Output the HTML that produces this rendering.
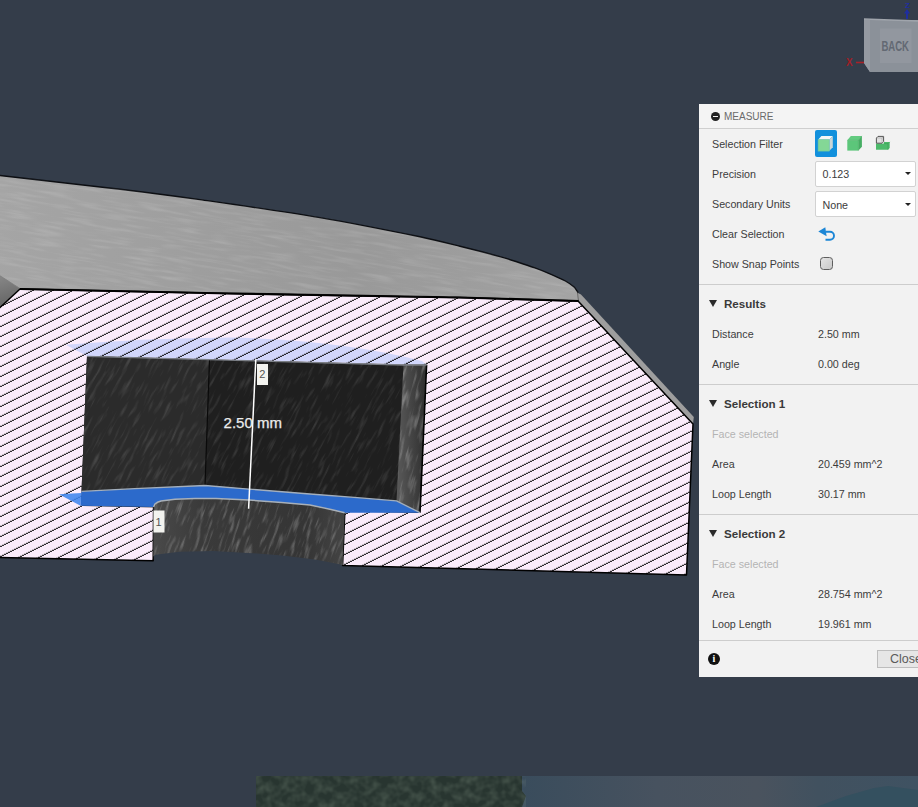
<!DOCTYPE html>
<html lang="en">
<head>
<meta charset="utf-8">
<title>Measure</title>
<style>
html,body{margin:0;padding:0;}
body{width:918px;height:807px;overflow:hidden;background:#343d4a;position:relative;font-family:"Liberation Sans",Arial,sans-serif;}
#scene{position:absolute;left:0;top:0;width:918px;height:807px;display:block;}
#photo{position:absolute;left:256px;top:776px;width:662px;height:31px;overflow:hidden;background:#3d4f5e;}
#panel{position:absolute;left:699px;top:104px;width:240px;height:572.500px;background:#f2f2f2;color:#3c3c3c;font-size:10.7px;}
#panel .hdr{position:absolute;left:0;top:0;width:100%;height:24px;border-bottom:1px solid #cfcfcf;background:#f4f4f4;}
#panel .hdr span{position:absolute;left:25px;top:6.700px;font-size:10px;color:#6a6a6a;letter-spacing:0px;}
#panel .hdr i{position:absolute;left:12px;top:8px;width:9px;height:9px;border-radius:50%;background:#222;}
#panel .hdr i:after{content:"";position:absolute;left:2px;top:4px;width:5px;height:1px;background:#f4f4f4;}
.row{position:absolute;left:13px;height:14px;line-height:14px;white-space:nowrap;}
.val{position:absolute;left:119px;height:14px;line-height:14px;white-space:nowrap;}
.sec{position:absolute;left:25px;height:14px;line-height:14px;font-weight:bold;font-size:11.6px;color:#3a3a3a;white-space:nowrap;}
.tri{position:absolute;left:10px;width:0;height:0;border-left:4.5px solid transparent;border-right:4.5px solid transparent;border-top:7px solid #2a2a2a;}
.hr{position:absolute;left:0;width:100%;height:1px;background:#cdcdcd;}
.dd{position:absolute;left:116px;width:101px;height:26px;background:#fff;border:1px solid #d2d2d2;box-sizing:border-box;border-radius:2px;}
.dd span{position:absolute;left:6.500px;top:5.500px;line-height:14px;}
.dd b{position:absolute;left:88.700px;top:10.800px;width:0;height:0;border-left:3.200px solid transparent;border-right:3.200px solid transparent;border-top:3.800px solid #222;}
.dis{color:#b4b4b4;}
</style>
</head>
<body>
<svg id="scene" width="918" height="807" viewBox="0 0 918 807">
<defs>
<pattern id="hatch" width="20" height="10" patternUnits="userSpaceOnUse" patternTransform="translate(0,1.8)">
<rect width="20" height="10" fill="#fbecfb"/>
<path d="M-20,15 L40,-15 M-20,25 L40,-5 M-20,5 L40,-25" stroke="#000" stroke-width="1" shape-rendering="crispEdges"/>
</pattern>
<pattern id="hatchLines" width="20" height="10" patternUnits="userSpaceOnUse" patternTransform="translate(0,1.8)">
<path d="M-20,15 L40,-15 M-20,25 L40,-5 M-20,5 L40,-25" stroke="#000" stroke-width="1" shape-rendering="crispEdges"/>
</pattern>
<linearGradient id="gtop" gradientUnits="userSpaceOnUse" x1="0" y1="200" x2="580" y2="260">
<stop offset="0" stop-color="#a5a5a5"/><stop offset="0.3" stop-color="#9f9f9f"/><stop offset="0.62" stop-color="#999"/><stop offset="0.85" stop-color="#9e9e9e"/><stop offset="1" stop-color="#a4a4a4"/>
</linearGradient>
<linearGradient id="gbev" gradientUnits="userSpaceOnUse" x1="0" y1="278" x2="8" y2="304">
<stop offset="0" stop-color="#858585"/><stop offset="1" stop-color="#666"/>
</linearGradient>

<filter id="noiseDark" x="0" y="0" width="100%" height="100%">
<feTurbulence type="fractalNoise" baseFrequency="0.05 0.3" numOctaves="2" seed="7" result="n"/>
<feColorMatrix in="n" type="matrix" values="0 0 0 0 1  0 0 0 0 1  0 0 0 0 1  3 0 0 0 -1.55"/>
<feComposite in2="SourceGraphic" operator="in"/>
</filter>
<filter id="noiseTop" x="0" y="0" width="100%" height="100%">
<feTurbulence type="fractalNoise" baseFrequency="0.03 0.35" numOctaves="2" seed="3" result="n"/>
<feColorMatrix in="n" type="matrix" values="0 0 0 0 1  0 0 0 0 1  0 0 0 0 1  1.2 0 0 0 -0.52"/>
<feComposite in2="SourceGraphic" operator="in"/>
</filter>
<linearGradient id="ghole" x1="0" y1="0" x2="1" y2="0">
<stop offset="0" stop-color="#4a4a4a"/><stop offset="0.25" stop-color="#3a3a3a"/><stop offset="0.8" stop-color="#353535"/><stop offset="1" stop-color="#444"/>
</linearGradient>
<linearGradient id="grw" x1="0" y1="0" x2="1" y2="0">
<stop offset="0" stop-color="#5a5a5a"/><stop offset="0.5" stop-color="#444"/><stop offset="1" stop-color="#2e2e2e"/>
</linearGradient>
</defs>
<!-- top face -->
<path d="M-100.0,164.5 C-66.7,168.2 -33.3,171.8 0.0,175.5 C40.0,180.0 80.0,184.4 120.0,189.2 C146.7,192.4 173.4,195.8 200.0,199.6 C240.0,205.3 280.1,210.9 320.0,217.6 C353.5,223.3 386.8,230.0 420.0,236.8 C433.4,239.6 446.7,243.0 460.0,246.3 C473.4,249.6 486.7,253.0 500.0,256.6 C505.9,258.2 511.6,260.1 517.4,262.0 C523.3,263.9 529.1,265.8 534.9,267.9 C540.8,270.1 546.6,272.4 552.3,274.9 C556.7,276.8 561.2,278.7 565.4,281.0 C568.5,282.7 571.5,284.7 574.1,287.1 C575.7,288.6 576.7,290.7 578.0,292.5 L579,302 L0,300 Z" fill="url(#gtop)"/>
<path d="M-100.0,164.5 C-66.7,168.2 -33.3,171.8 0.0,175.5 C40.0,180.0 80.0,184.4 120.0,189.2 C146.7,192.4 173.4,195.8 200.0,199.6 C240.0,205.3 280.1,210.9 320.0,217.6 C353.5,223.3 386.8,230.0 420.0,236.8 C433.4,239.6 446.7,243.0 460.0,246.3 C473.4,249.6 486.7,253.0 500.0,256.6 C505.9,258.2 511.6,260.1 517.4,262.0 C523.3,263.9 529.1,265.8 534.9,267.9 C540.8,270.1 546.6,272.4 552.3,274.9 C556.7,276.8 561.2,278.7 565.4,281.0 C568.5,282.7 571.5,284.7 574.1,287.1 C575.7,288.6 576.7,290.7 578.0,292.5" fill="none" stroke="#0c0e12" stroke-width="1.4"/>
<path d="M578,292.5 L578.5,301" stroke="#222" stroke-width="1" fill="none"/>
<!-- left bevel -->
<path d="M-2,274.5 L20,288.5 L-2,309 Z" fill="url(#gbev)" stroke="#7d7d7d" stroke-width="0.8"/>
<!-- chamfer strip -->
<path d="M578,293 L581,294.5 L693.8,417 L693,424 L578.5,301 Z" fill="#9e9e9e"/>
<!-- hatch section -->
<path d="M20,289 L230,293.5 L460,297.5 L578,301 L693,424 L686.5,575 L560,571.4 L342.6,565.4 L344.9,510 L153.6,505 L153.2,560.8 L-5,557.4 L-5,312 Z" fill="url(#hatch)" stroke="#000" stroke-width="1.5" stroke-linejoin="round"/>
<path d="M20,289 L230,293.5 L460,297.5 L578.5,301" fill="none" stroke="#000" stroke-width="2.2"/>

<!-- top face texture -->
<clipPath id="cpTop"><path d="M-100.0,164.5 C-66.7,168.2 -33.3,171.8 0.0,175.5 C40.0,180.0 80.0,184.4 120.0,189.2 C146.7,192.4 173.4,195.8 200.0,199.6 C240.0,205.3 280.1,210.9 320.0,217.6 C353.5,223.3 386.8,230.0 420.0,236.8 C433.4,239.6 446.7,243.0 460.0,246.3 C473.4,249.6 486.7,253.0 500.0,256.6 C505.9,258.2 511.6,260.1 517.4,262.0 C523.3,263.9 529.1,265.8 534.9,267.9 C540.8,270.1 546.6,272.4 552.3,274.9 C556.7,276.8 561.2,278.7 565.4,281.0 C568.5,282.7 571.5,284.7 574.1,287.1 C575.7,288.6 576.7,290.7 578.0,292.5 L578,300 L20,288 L0,275 Z"/></clipPath>
<g clip-path="url(#cpTop)"><rect x="-60" y="-60" width="760" height="620" transform="rotate(9 300 240)" fill="#fff" opacity="0.26" filter="url(#noiseTop)"/></g>
<!-- selection 2 highlight -->
<path d="M65.7,344.8 Q150,338 230,337.5 Q340,340 422,361 L426,364.7 L87,356 Z" fill="#d1d6fb"/>
<path d="M65.7,344.8 Q150,338 230,337.5 Q340,340 422,361 L426,364.7 L87,356 Z" fill="url(#hatchLines)"/>
<!-- pocket -->
<path d="M87,356 L404,364.7 L426.6,364.7 L420,513 L82,506 L81.5,491 Z" fill="#1f1f1f"/>
<path d="M87,356 L209.5,360 L205,487 L81.5,492 Z" fill="#2b2b2b"/>
<clipPath id="cpPocket"><path d="M87,356 L404,364.7 L397,503 L81.5,492 Z"/></clipPath>
<g clip-path="url(#cpPocket)"><rect x="40" y="220" width="420" height="420" transform="rotate(-62 250 430)" fill="#fff" opacity="0.13" filter="url(#noiseDark)"/></g>
<path d="M209.5,360 L205,485.5" stroke="#0a0a0a" stroke-width="1.2" fill="none"/>
<!-- right wall -->
<path d="M403.5,364.7 L426.6,364.7 L420,512.7 L396.5,500.9 Z" fill="url(#grw)"/>
<clipPath id="cpRw"><path d="M403.5,364.7 L426.6,364.7 L420,512.7 L396.5,500.9 Z"/></clipPath>
<g clip-path="url(#cpRw)"><rect x="330" y="360" width="160" height="160" transform="rotate(-75 410 440)" fill="#fff" opacity="0.3" filter="url(#noiseDark)"/></g>
<path d="M426.6,364.7 L420,512.7" stroke="#000" stroke-width="1.6" fill="none"/>
<path d="M87,356.3 L404,365 L426.6,365" stroke="#7b7f86" stroke-width="1.3" fill="none"/>
<!-- hole wall -->
<path d="M153.6,507 L155,504 L157.5,502.3 L161,501.1 L175,499.2 L195,498.4 L216,498.5 L249,500.1 L281.5,502.5 L310,505 L331,509.4 L344.7,512.7 L342.6,565.2 L341.8,564.8 L316.6,559.7 L282.3,555.6 L248,552.9 L213.6,551 L179.3,551.7 L155.3,554.7 L153.4,556.5 L153.2,561 Z" fill="url(#ghole)"/>
<clipPath id="cpHole"><path d="M153.6,507 L155,504 L157.5,502.3 L161,501.1 L175,499.2 L195,498.4 L216,498.5 L249,500.1 L281.5,502.5 L310,505 L331,509.4 L344.7,512.7 L342.6,565.2 L341.8,564.8 L316.6,559.7 L282.3,555.6 L248,552.9 L213.6,551 L179.3,551.7 L155.3,554.7 L153.4,556.5 L153.2,561 Z"/></clipPath>
<g clip-path="url(#cpHole)"><rect x="140" y="420" width="220" height="220" transform="rotate(-70 250 530)" fill="#fff" opacity="0.3" filter="url(#noiseDark)"/></g>
<!-- blue face -->
<path d="M59,494.3 L81.4,493 L80.5,505.8 Z" fill="#3f86ee" fill-opacity="0.88"/>
<path d="M81.4,491.4 L134.8,488.7 L205,485.5 L248.8,489.1 L310,494 L357.3,497.7 L396.5,500.9 L420,512.7 L344.7,512.8 L344.7,512.7 L331,509.4 L310,505 L281.5,502.5 L249,500.1 L216,498.5 L195,498.4 L175,499.2 L161,501.1 L157.5,502.3 L155,504 L153.6,507 L80.5,505.8 Z" fill="#2c6acb"/>
<path d="M81.4,491.4 L134.8,488.7 L205,485.5 L248.8,489.1 L310,494 L357.3,497.7 L396.5,500.9 L420,512.7" fill="none" stroke="#a3afbd" stroke-width="1.3"/>
<path d="M153.6,507 L155,504 L157.5,502.3 L161,501.1 L175,499.2 L195,498.4 L216,498.5 L249,500.1 L281.5,502.5 L310,505 L331,509.4 L344.7,512.7" fill="none" stroke="#a8b0b9" stroke-width="1.5"/>
<!-- measure line -->
<path d="M255.8,359.3 L248.6,508.8" stroke="#fff" stroke-width="1.5" fill="none"/>
<text x="223.6" y="427.7" font-family="'Liberation Sans',Arial,sans-serif" font-size="15" fill="#ececec" stroke="#ececec" stroke-width="0.25">2.50 mm</text>
<rect x="257" y="364" width="11" height="21" fill="#f3f3ef"/>
<text x="259.2" y="378" font-family="'Liberation Sans',Arial,sans-serif" font-size="11" fill="#555">2</text>
<rect x="153.5" y="510.5" width="11" height="22" fill="#f3f3ef"/>
<text x="155.5" y="526" font-family="'Liberation Sans',Arial,sans-serif" font-size="11" fill="#555">1</text>

<!-- nav cube -->
<g>
<path d="M907,10 L907,19" stroke="#1f2ea0" stroke-width="2"/>
<text x="905" y="7.500" font-family="'Liberation Sans',Arial,sans-serif" font-size="8" font-weight="bold" fill="#1f2ea0">Z</text><path d="M904,13.500 L910,13.500 L907,9 Z" fill="#1f2ea0"/>
<path d="M856,62.500 L864,62.500" stroke="#a82228" stroke-width="1.6"/>
<text x="846" y="66" font-family="'Liberation Sans',Arial,sans-serif" font-size="10" font-weight="bold" fill="#a02028">X</text>
<path d="M864,19 L870,20 L918,20 L918,72 L870,72 L864,63 Z" fill="#8b9199"/>
<path d="M864,19 L870,20 L870,72 L864,63 Z" fill="#959aa2"/>
<path d="M864,19 L918,21" stroke="#a0a5ac" stroke-width="1.5" fill="none"/>
<rect x="880" y="28.500" width="31.500" height="34.500" fill="#92979f"/>
<text x="881.400" y="51.400" font-family="'Liberation Sans',Arial,sans-serif" font-size="14" font-weight="bold" fill="#636973" textLength="27.600" lengthAdjust="spacingAndGlyphs">BACK</text>
</g>
</svg>
<div id="photo"><svg width="662" height="31" viewBox="0 0 662 31">
<defs>
<linearGradient id="sky" x1="0" y1="0" x2="1" y2="0"><stop offset="0" stop-color="#394c5c"/><stop offset="0.35" stop-color="#47525f"/><stop offset="0.6" stop-color="#4a535e"/><stop offset="0.75" stop-color="#41515f"/><stop offset="1" stop-color="#3f5262"/></linearGradient>
<filter id="leaf" x="0" y="0" width="100%" height="100%"><feTurbulence type="fractalNoise" baseFrequency="0.12" numOctaves="2" seed="11"/><feColorMatrix type="matrix" values="0 0 0 0 0.27  0 0 0 0 0.35  0 0 0 0 0.27  1.6 0 0 0 -0.55"/><feComposite in2="SourceGraphic" operator="in"/></filter>
</defs>
<rect x="260" width="402" height="31" fill="url(#sky)"/>
<rect x="0" y="0" width="266" height="31" fill="#283530"/>
<path d="M258,0 L266,4 L262,10 L270,20 L266,31 L250,31 L250,0 Z" fill="#283530"/>
<rect x="0" y="0" width="270" height="31" fill="#fff" opacity="0.32" filter="url(#leaf)"/>
<path d="M560,31 L590,20 L618,12 L632,10 L662,14 L662,31 Z" fill="#34505f"/>
</svg></div>
<div id="panel">
<div class="hdr"><i></i><span>MEASURE</span></div>
<div class="row " style="top:33px">Selection Filter</div>
<div id="selbtn" style="position:absolute;left:115.800px;top:26.400px;width:22.300px;height:26.700px;border-radius:2px;background:#1290dc;"></div>
<svg style="position:absolute;left:116px;top:27px" width="90" height="26" viewBox="0 0 90 26">
<path d="M3.100,8.700 L6.400,4.900 L17.800,4.900 L14.200,8.700 Z" fill="#f2f6f6"/>
<path d="M14.200,8.700 L17.800,4.900 L17.800,16.300 L14.200,20.100 Z" fill="#c9d6d8"/>
<rect x="3.100" y="8.700" width="11.100" height="11.400" fill="#84d796" stroke="#6fc7a0" stroke-width="0.6"/>
<rect x="32.300" y="9.300" width="11.100" height="10.300" fill="#5cc67a"/>
<path d="M32.300,9.300 L35.800,4.900 L46.900,4.900 L43.400,9.300 Z" fill="#63cb80"/>
<path d="M43.400,9.300 L46.900,4.900 L46.900,15.800 L43.400,19.600 Z" fill="#46ad63"/>
<path d="M32.300,9.300 L43.400,9.300 L43.400,19.600 M43.400,9.300 L46.900,4.900" fill="none" stroke="#49b066" stroke-width="0.6"/>
<path d="M61,12.600 L69,12.600 L69,10.900 L74.700,10.900 L74.700,17 L73,18.700 L61,18.700 Z" fill="#4dba6b"/>
<path d="M69,12.600 L73,12.600 L74.700,10.900 M73,12.600 L73,18.700" fill="none" stroke="#3a9d56" stroke-width="0.6"/>
<path d="M61.400,7 L63,5.400 L68.600,5.400 L68.600,10.600 L67,12.200 L61.400,12.200 Z" fill="#e2e2e2" stroke="#444" stroke-width="0.9" stroke-linejoin="round"/>
<path d="M61.400,7 L67,7 L67,12.200 M67,7 L68.600,5.400" fill="none" stroke="#999" stroke-width="0.5"/>
</svg>
<div class="row " style="top:63px">Precision</div>
<div class="dd" style="top:56.700px"><span>0.123</span><b></b></div>
<div class="row " style="top:93px">Secondary Units</div>
<div class="dd" style="top:87.100px"><span>None</span><b></b></div>
<div class="row " style="top:123px">Clear Selection</div>
<svg style="position:absolute;left:118px;top:122px" width="20" height="16" viewBox="0 0 20 16">
<path d="M8.500,5.800 L13,5.800 A4,4 0 0 1 13,13.800 L8.500,13.800" fill="none" stroke="#1c86d6" stroke-width="1.900"/>
<path d="M1.300,5.600 L8.300,1.200 L9.600,10.200 Z" fill="#1c86d6"/>
</svg>
<div class="row " style="top:153px">Show Snap Points</div>
<div style="position:absolute;left:120.500px;top:153px;width:11px;height:11px;border:1.5px solid #5e5e5e;border-radius:3.500px;background:linear-gradient(135deg,#e4e4e4,#c9c9c9);"></div>
<div class="hr" style="top:180px"></div>
<div class="tri" style="top:196px"></div><div class="sec" style="top:193px">Results</div>
<div class="row " style="top:223px">Distance</div><div class="val" style="top:223px">2.50 mm</div>
<div class="row " style="top:253px">Angle</div><div class="val" style="top:253px">0.00 deg</div>
<div class="hr" style="top:280px"></div>
<div class="tri" style="top:296px"></div><div class="sec" style="top:293px">Selection 1</div>
<div class="row dis" style="top:323px">Face selected</div>
<div class="row " style="top:353px">Area</div><div class="val" style="top:353px">20.459 mm^2</div>
<div class="row " style="top:383px">Loop Length</div><div class="val" style="top:383px">30.17 mm</div>
<div class="hr" style="top:410px"></div>
<div class="tri" style="top:426px"></div><div class="sec" style="top:423px">Selection 2</div>
<div class="row dis" style="top:453px">Face selected</div>
<div class="row " style="top:483px">Area</div><div class="val" style="top:483px">28.754 mm^2</div>
<div class="row " style="top:513px">Loop Length</div><div class="val" style="top:513px">19.961 mm</div>
<div class="hr" style="top:536px"></div>
<div style="position:absolute;left:9px;top:549px;width:12px;height:12px;border-radius:50%;background:#111;color:#fff;font-family:'Liberation Serif',serif;font-weight:bold;font-size:10px;line-height:12px;text-align:center;">i</div>
<div style="position:absolute;left:178px;top:545.500px;width:70px;height:18px;box-sizing:border-box;border:1px solid #bdbdbd;background:#e6e6e6;color:#5a5a5a;font-size:12.500px;line-height:16px;padding-left:12px;">Close</div>
</div>
</body>
</html>
